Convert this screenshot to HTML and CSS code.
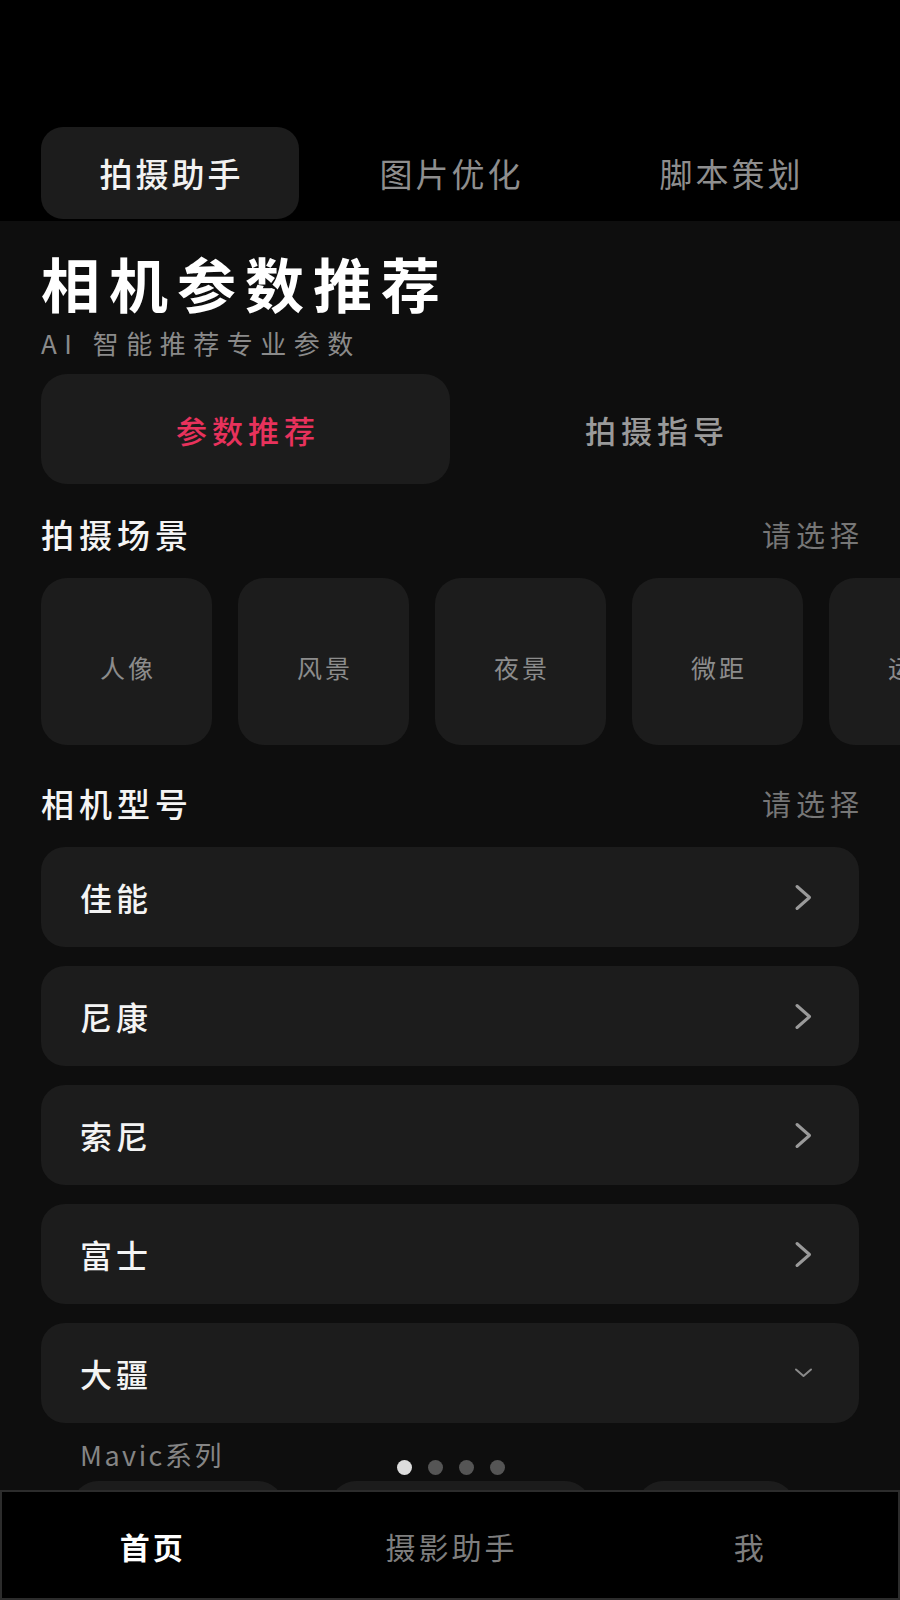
FILE: index.html
```html
<!DOCTYPE html>
<html lang="zh-CN">
<head>
<meta charset="utf-8">
<title>相机参数推荐</title>
<link rel="stylesheet" href="styles.css">
</head>
<body>
<div class="screen">
  <header class="top-bar">
    <nav class="top-tabs">
      <div class="top-tab active"><span>拍摄助手</span></div>
      <div class="top-tab"><span>图片优化</span></div>
      <div class="top-tab"><span>脚本策划</span></div>
    </nav>
  </header>

  <main class="content">
    <h1 class="title">相机参数推荐</h1>
    <p class="subtitle">AI 智能推荐专业参数</p>

    <div class="mode-switch">
      <div class="mode active"><span>参数推荐</span></div>
      <div class="mode"><span>拍摄指导</span></div>
    </div>

    <div class="section-head">
      <h2>拍摄场景</h2>
      <span class="hint">请选择</span>
    </div>
    <div class="scene-row">
      <div class="scene"><span>人像</span></div>
      <div class="scene"><span>风景</span></div>
      <div class="scene"><span>夜景</span></div>
      <div class="scene"><span>微距</span></div>
      <div class="scene"><span>运动</span></div>
    </div>

    <div class="section-head second">
      <h2>相机型号</h2>
      <span class="hint">请选择</span>
    </div>
    <div class="brand-list">
      <div class="brand"><span>佳能</span><svg class="chev" width="19" height="27" viewBox="0 0 19 27"><polyline points="3,2.5 15.5,13.5 3,24.5" fill="none" stroke="#9a9a9a" stroke-width="3" stroke-linecap="round" stroke-linejoin="round"/></svg></div>
      <div class="brand"><span>尼康</span><svg class="chev" width="19" height="27" viewBox="0 0 19 27"><polyline points="3,2.5 15.5,13.5 3,24.5" fill="none" stroke="#9a9a9a" stroke-width="3" stroke-linecap="round" stroke-linejoin="round"/></svg></div>
      <div class="brand"><span>索尼</span><svg class="chev" width="19" height="27" viewBox="0 0 19 27"><polyline points="3,2.5 15.5,13.5 3,24.5" fill="none" stroke="#9a9a9a" stroke-width="3" stroke-linecap="round" stroke-linejoin="round"/></svg></div>
      <div class="brand"><span>富士</span><svg class="chev" width="19" height="27" viewBox="0 0 19 27"><polyline points="3,2.5 15.5,13.5 3,24.5" fill="none" stroke="#9a9a9a" stroke-width="3" stroke-linecap="round" stroke-linejoin="round"/></svg></div>
      <div class="brand open"><span>大疆</span><svg class="chev-down" width="19" height="12" viewBox="0 0 19 12"><polyline points="2,2.5 9.5,9 17,2.5" fill="none" stroke="#8a8a8a" stroke-width="2" stroke-linecap="round" stroke-linejoin="round"/></svg></div>
    </div>
    <div class="series">Mavic系列</div>
    <div class="chip-row">
      <div class="chip c1"></div>
      <div class="chip c2"></div>
      <div class="chip c3"></div>
    </div>
  </main>

  <div class="dots">
    <i class="dot on"></i><i class="dot"></i><i class="dot"></i><i class="dot"></i>
  </div>

  <footer class="bottom-nav">
    <div class="nav-item active"><span>首页</span></div>
    <div class="nav-item"><span>摄影助手</span></div>
    <div class="nav-item"><span>我</span></div>
  </footer>
</div>
</body>
</html>
```

FILE: styles.css
```css
* { box-sizing: border-box; margin: 0; padding: 0; }

html, body {
  width: 900px;
  height: 1600px;
  background: #0e0e0e;
  overflow: hidden;
}

body {
  font-family: "Noto Sans CJK SC", "Noto Sans", sans-serif;
  color: #fff;
}

.screen {
  position: relative;
  width: 900px;
  height: 1600px;
  overflow: hidden;
}

/* top tabs */
.top-bar {
  background: #000;
  height: 221px;
  padding: 127px 41px 0;
}

.top-tabs {
  display: grid;
  grid-template-columns: repeat(3, 1fr);
  column-gap: 22px;
  height: 92px;
}

.top-tab {
  display: flex;
  align-items: center;
  justify-content: center;
  border-radius: 22px;
  font-size: 33px;
  letter-spacing: 3px;
  color: #8e8e8e;
}

.top-tab span { padding-left: 3px; }

.top-tab.active {
  background: #1c1c1c;
  color: #f2f2f2;
  font-weight: 500;
}

/* content */
.content {
  padding: 0 41px;
}

.title {
  margin-top: 31px;
  height: 62px;
  line-height: 62px;
  font-size: 59px;
  font-weight: 700;
  letter-spacing: 9px;
  color: #fff;
}

.subtitle {
  margin-top: 12px;
  height: 34px;
  line-height: 34px;
  font-size: 26px;
  letter-spacing: 7.5px;
  color: #8a8a8a;
}

.mode-switch {
  margin-top: 14px;
  display: grid;
  grid-template-columns: 1fr 1fr;
  height: 110px;
}

.mode {
  display: flex;
  align-items: center;
  justify-content: center;
  border-radius: 26px;
  font-size: 31px;
  font-weight: 500;
  letter-spacing: 5px;
  color: #9a9a9a;
}

.mode span { padding-left: 5px; }

.mode.active {
  background: #1c1c1c;
  color: #e8325c;
}

.section-head {
  margin-top: 30px;
  height: 40px;
  display: flex;
  align-items: center;
  justify-content: space-between;
}

.section-head.second { margin-top: 38px; }

.section-head h2 {
  font-size: 33px;
  font-weight: 500;
  letter-spacing: 5px;
  color: #f4f4f4;
}

.hint {
  font-size: 29px;
  letter-spacing: 5px;
  margin-right: -5px;
  color: #767676;
}

.scene-row {
  margin-top: 24px;
  margin-right: -41px;
  display: flex;
  gap: 26px;
  overflow: hidden;
}

.scene {
  flex: 0 0 171px;
  height: 167px;
  border-radius: 26px;
  background: #1c1c1c;
  display: flex;
  align-items: center;
  justify-content: center;
  font-size: 25px;
  letter-spacing: 3px;
  color: #8c8c8c;
}

.scene span { padding-left: 3px; margin-top: 10px; }

.brand-list {
  margin-top: 24px;
  display: flex;
  flex-direction: column;
  gap: 19px;
}

.brand {
  height: 100px;
  border-radius: 24px;
  background: #1c1c1c;
  display: flex;
  align-items: center;
  justify-content: space-between;
  padding: 0 46px 0 39px;
  font-size: 32px;
  font-weight: 500;
  letter-spacing: 4px;
  color: #f4f4f4;
}

.series {
  margin-top: 15px;
  padding-left: 39px;
  height: 34px;
  line-height: 34px;
  font-size: 27px;
  letter-spacing: 2.5px;
  color: #858585;
}

.chip-row {
  margin-top: 9px;
  display: flex;
  padding-left: 31px;
  gap: 46px;
}

.chip {
  height: 60px;
  border-radius: 26px;
  background: #1c1c1c;
}

.chip.c1 { width: 212px; }
.chip.c2 { width: 261px; }
.chip.c3 { width: 158px; }

/* pager dots overlay */
.dots {
  position: absolute;
  left: 0;
  right: 0;
  top: 1460px;
  display: flex;
  justify-content: center;
  gap: 16px;
  padding-left: 1px;
}

.dot {
  display: block;
  width: 15px;
  height: 15px;
  border-radius: 50%;
  background: #555;
}

.dot.on { background: #dcdcdc; }

/* bottom nav overlay */
.bottom-nav {
  position: absolute;
  left: 0;
  right: 0;
  top: 1490px;
  height: 110px;
  background: #000;
  border: 2px solid #2c2c2c;
  display: grid;
  grid-template-columns: repeat(3, 1fr);
}

.nav-item {
  display: flex;
  align-items: center;
  justify-content: center;
  font-size: 30px;
  letter-spacing: 3px;
  color: #7e7e7e;
}

.nav-item span { padding-left: 3px; margin-top: 2px; }

.nav-item.active {
  color: #fff;
  font-weight: 700;
}
```
